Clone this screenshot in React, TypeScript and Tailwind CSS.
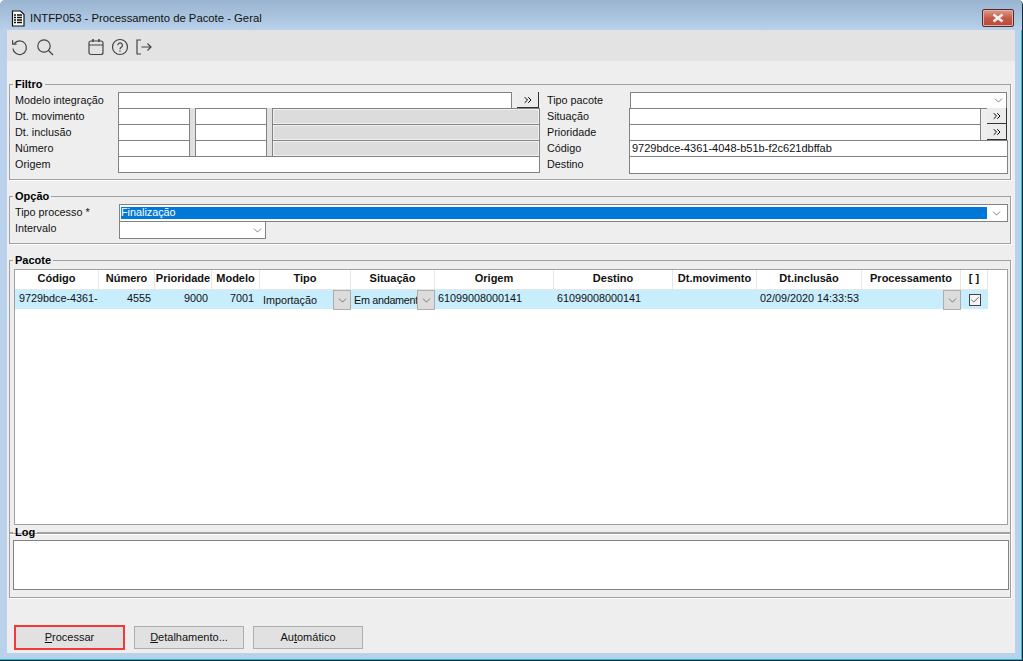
import React from 'react';
import { ChevronDown, ChevronsRight, Check } from 'lucide-react';

const cols = [
    { label: 'Código', w: 'w-[84px]' },
    { label: 'Número', w: 'w-[56px]' },
    { label: 'Prioridade', w: 'w-[57px]' },
    { label: 'Modelo', w: 'w-[48px]' },
    { label: 'Tipo', w: 'w-[91px]' },
    { label: 'Situação', w: 'w-[84px]' },
    { label: 'Origem', w: 'w-[119px]' },
    { label: 'Destino', w: 'w-[119px]' },
    { label: 'Dt.movimento', w: 'w-[84px]' },
    { label: 'Dt.inclusão', w: 'w-[105px]' },
    { label: 'Processamento', w: 'w-[99px]' },
    { label: '[ ]', w: 'w-[27px]' },
];

function Group({ title, className, children }: { title: string; className: string; children?: React.ReactNode }) {
    return (
        <fieldset className={`border border-[#a0a0a0] shadow-[1px_1px_0_#ffffff] ${className}`}>
            <legend className="ml-[3px] px-[2px] h-[14px] leading-[14px] text-[11px] font-bold text-black">{title}</legend>
            {children}
        </fieldset>
    );
}

function Label({ text, className = '' }: { text: string; className?: string }) {
    return <div className={`h-[16px] leading-[16px] text-[10.8px] text-[#111] whitespace-nowrap ${className}`}>{text}</div>;
}

function Input({ className = '', value }: { className?: string; value?: string }) {
    return <div className={`border border-[#828282] bg-white pl-[2px] leading-[14px] text-[11px] text-[#111] box-border ${className}`}>{value}</div>;
}

function MoreButton({ className = '' }: { className?: string }) {
    return (
        <div className={`bg-[#ececec] border-r border-b border-r-[#333] border-b-[#333] flex items-center justify-center ${className}`}>
            <ChevronsRight size={12} strokeWidth={2} className="text-black" />
        </div>
    );
}

function DateRow() {
    return (
        <div className="flex h-[16px]">
            <Input className="w-[72px] h-[17px]" />
            <div className="w-[5px] h-[17px] bg-[#e0e0e0]" />
            <Input className="w-[72px] h-[17px] " />
            <div className="w-[5px] h-[17px] bg-[#e0e0e0]" />
            <div className="flex-1 h-[17px] border border-[#828282] bg-[#dcdcdc] shadow-[inset_0_0_0_1px_#f0f0f0]" />
        </div>
    );
}

function GridSelect({ value, inputClass }: { value: string; inputClass: string }) {
    return (
        <div className="flex h-full items-stretch justify-between">
            <span className={`pl-[3px] leading-[21px] text-[10.8px] text-[#111] whitespace-nowrap overflow-hidden ${inputClass}`}>{value}</span>
            <div className="w-[18px] h-[20px] shrink-0 bg-[#dcdcdc] border border-[#adadad] flex items-center justify-center">
                <ChevronDown size={13} strokeWidth={1.2} className="text-[#444]" />
            </div>
        </div>
    );
}

export default function App() {
    return (
        <div className="w-[1023px] h-[661px] overflow-hidden flex flex-col rounded-t-[5px] bg-[#b9d1ea] border-r border-b border-[#0b2b3a] shadow-[inset_-1px_-1px_0_#33b5d6] font-['Liberation_Sans',sans-serif]">
            {/* title bar */}
            <div className="h-[30px] shrink-0 flex items-center pt-[6px] pl-[11px] pr-[8px] bg-gradient-to-b from-[#99b4d1] to-[#b9d1ea]">
                <svg width="14" height="17" viewBox="0 0 14 17" className="shrink-0">
                    <path d="M1.500 1h8l3.500 3.500v11.500h-11.500z" fill="#fff" stroke="#111" strokeWidth="1.200" />
                    <path d="M3 5h2M6 5h5M3 7.500h2M6 7.500h5M3 10h2M6 10h5M3 12.500h2M6 12.500h5" stroke="#111" strokeWidth="1.500" />
                </svg>
                <span className="ml-[5px] text-[11.3px] text-[#111]">INTFP053 - Processamento de Pacote - Geral</span>
                <div className="ml-auto w-[32px] h-[18px] rounded-[2px] border border-[#4f2b2b] bg-gradient-to-b from-[#dc9a90] via-[#c55a47] to-[#b84a38] flex items-center justify-center shadow-[inset_0_0_0_1px_#e3b0a8]">
                    <svg width="14" height="10" viewBox="0 0 14 10">
                        <path d="M2.500 1.500l9 7M11.500 1.500l-9 7" stroke="#f4f1ef" strokeWidth="2.600" fill="none" />
                    </svg>
                </div>
            </div>

            <div className="flex-1 mx-[7px] mb-[7px] flex flex-col bg-[#eeeeee] min-h-0">
                {/* toolbar */}
                <div className="h-[31px] shrink-0 bg-[#e3e3e3] flex items-center pt-[2px] pl-[3px] text-[#444]">
                    <svg width="18" height="18" viewBox="0 0 18 18" fill="none" stroke="currentColor" strokeWidth="1.200">
                        <path d="M4.200 5.600a6.800 6.800 0 1 1-1.300 5" />
                        <path d="M2.600 2.200v4h4" />
                    </svg>
                    <svg width="18" height="18" viewBox="0 0 18 18" fill="none" stroke="currentColor" strokeWidth="1.200" className="ml-[8px]">
                        <circle cx="8" cy="8" r="6.200" />
                        <path d="M12.500 12.500l4.500 4.500" />
                    </svg>
                    <svg width="18" height="18" viewBox="0 0 18 18" fill="none" stroke="currentColor" strokeWidth="1.200" className="ml-[33px]">
                        <rect x="2" y="3" width="14" height="13.500" rx="2" />
                        <path d="M2 7h14" />
                        <path d="M6 1v3M12 1v3" strokeWidth="1.600" />
                    </svg>
                    <svg width="18" height="18" viewBox="0 0 18 18" fill="none" stroke="currentColor" strokeWidth="1.200" className="ml-[6px]">
                        <circle cx="9" cy="9" r="7.500" />
                        <path d="M6.800 7.200a2.300 2.300 0 1 1 3.500 2c-.9.500-1.300 1-1.300 2" />
                        <path d="M9 12.600v1.200" />
                    </svg>
                    <svg width="18" height="18" viewBox="0 0 18 18" fill="none" stroke="currentColor" strokeWidth="1.200" className="ml-[6px]">
                        <path d="M6 2H2v14h4" />
                        <path d="M6.500 9h9.500M12.500 5.500L16 9l-3.500 3.500" />
                    </svg>
                </div>

                <div className="flex-1 flex flex-col pl-[2px] pr-[4px] pt-[16px] min-h-0">
                    {/* Filtro */}
                    <Group title="Filtro" className="h-[103px]">
                        <div className="flex pt-[1px] pl-[5px] pr-[2px]">
                            <div className="w-[103px] shrink-0">
                                {['Modelo integração', 'Dt. movimento', 'Dt. inclusão', 'Número', 'Origem'].map(t => <Label key={t} text={t} />)}
                            </div>
                            <div className="w-[422px] shrink-0 flex flex-col">
                                <div className="flex h-[16px] justify-between">
                                    <Input className="w-[394px] h-[17px]" />
                                    <MoreButton className="w-[22px] h-[16px] mr-[1px]" />
                                </div>
                                <DateRow />
                                <DateRow />
                                <DateRow />
                                <Input className="w-full h-[17px]" />
                            </div>
                            <div className="w-[89px] shrink-0 pl-[7px]">
                                {['Tipo pacote', 'Situação', 'Prioridade', 'Código', 'Destino'].map(t => <Label key={t} text={t} />)}
                            </div>
                            <div className="flex-1 flex flex-col">
                                <div className="h-[16px] pl-[1px] pr-[1px]">
                                    <div className="h-[17px] border border-[#828282] bg-white flex justify-end items-center pr-[1px]">
                                        <ChevronDown size={13} strokeWidth={1.2} className="text-[#444]" />
                                    </div>
                                </div>
                                <div className="flex h-[16px] justify-between pr-[1px]">
                                    <Input className="w-[352px] h-[17px]" />
                                    <MoreButton className="w-[20px] h-[16px]" />
                                </div>
                                <div className="flex h-[16px] justify-between pr-[1px]">
                                    <Input className="w-[352px] h-[17px]" />
                                    <MoreButton className="w-[20px] h-[16px]" />
                                </div>
                                <Input className="h-[17px]" value="9729bdce-4361-4048-b51b-f2c621dbffab" />
                                <Input className="h-[18px] mt-[-1px]" />
                            </div>
                        </div>
                    </Group>

                    {/* Opcao */}
                    <Group title="Opção" className="h-[55px] mt-[9px]">
                        <div className="flex pt-[1px] pl-[5px] pr-[2px]">
                            <div className="w-[104px] shrink-0">
                                <Label text="Tipo processo *" />
                                <Label text="Intervalo" />
                            </div>
                            <div className="flex-1 flex flex-col">
                                <div className="h-[18px] border border-[#828282] bg-white flex items-center pl-[1px] pr-[1px]">
                                    <div className="flex-1 h-[12px] bg-[#0078d7] text-white text-[10.8px] leading-[11px] whitespace-nowrap">Finalização</div>
                                    <div className="w-[19px] flex justify-center">
                                        <ChevronDown size={13} strokeWidth={1.2} className="text-[#444]" />
                                    </div>
                                </div>
                                <div className="h-[18px] w-[147px] mt-[-1px] border border-[#828282] bg-white flex justify-end items-center pr-[1px]">
                                    <ChevronDown size={13} strokeWidth={1.2} className="text-[#444]" />
                                </div>
                            </div>
                        </div>
                    </Group>

                    {/* Pacote */}
                    <Group title="Pacote" className="h-[281px] mt-[9px]">
                        <div className="mx-[4px] mt-[2px] mr-[2px] h-[256px] border border-[#a0a0a0] bg-white">
                            <div className="flex h-[20px]">
                                {cols.map(c => (
                                    <div key={c.label} className={`${c.w} shrink-0 border-r border-b border-[#e6e6e6] text-center text-[11px] leading-[16px] font-bold text-[#111] whitespace-nowrap`}>
                                        {c.label}
                                    </div>
                                ))}
                            </div>
                            <div className="flex h-[19px] w-[973px] bg-[#c8edfd] text-[10.8px] leading-[17px] text-[#111]">
                                <div className="w-[84px] pl-[4px] whitespace-nowrap overflow-hidden">9729bdce-4361-</div>
                                <div className="w-[56px] pr-[4px] text-right">4555</div>
                                <div className="w-[57px] pr-[4px] text-right">9000</div>
                                <div className="w-[48px] pr-[6px] text-right">7001</div>
                                <div className="w-[91px]"><GridSelect value="Importação" inputClass="" /></div>
                                <div className="w-[84px]"><GridSelect value="Em andamento" inputClass="w-[66px] tracking-[-0.3px]" /></div>
                                <div className="w-[119px] pl-[3px]">61099008000141</div>
                                <div className="w-[119px] pl-[3px]">61099008000141</div>
                                <div className="w-[84px]" />
                                <div className="w-[105px] pl-[3px]">02/09/2020 14:33:53</div>
                                <div className="w-[99px]"><GridSelect value="" inputClass="" /></div>
                                <div className="w-[27px] flex justify-center pt-[4px]">
                                    <div className="w-[12px] h-[12px] border border-[#444] bg-[#f4f4f4] flex items-center justify-center">
                                        <Check size={10} strokeWidth={1.8} className="text-[#333]" />
                                    </div>
                                </div>
                            </div>
                        </div>
                    </Group>

                    {/* Log */}
                    <Group title="Log" className="h-[73px] mt-[-9px] relative">
                        <div className="mx-[3px] mt-[1px] h-[50px] mr-[1px] border border-[#828282] bg-white" />
                    </Group>

                    {/* buttons */}
                    <div className="flex gap-[9px] mt-[28px] pl-[5px] text-[11px] text-[#111]">
                        <button className="w-[111px] h-[25px] mt-[-1px] border-2 border-[#f33a3a] bg-[#e1e1e1]"><u>P</u>rocessar</button>
                        <button className="w-[110px] h-[23px] border border-[#adadad] bg-[#e1e1e1]"><u>D</u>etalhamento...</button>
                        <button className="w-[110px] h-[23px] border border-[#adadad] bg-[#e1e1e1]">Au<u>t</u>omático</button>
                    </div>
                </div>
            </div>
        </div>
    );
}
